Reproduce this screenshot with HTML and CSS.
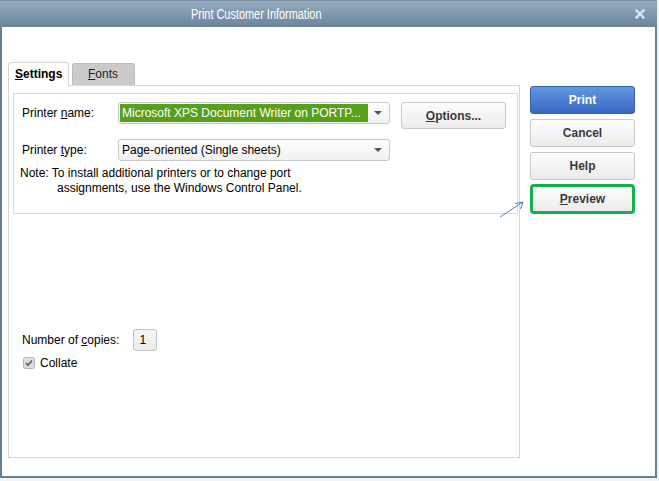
FILE: index.html
```html
<!DOCTYPE html>
<html lang="en">
<head>
  <meta charset="UTF-8">
  <title>Print Customer Information</title>
  <link rel="stylesheet" href="styles.css">
</head>
<body>
  <div class="window">
    <div class="titlebar">
      <span class="title">Print Customer Information</span>
      <svg class="close" width="10" height="10" viewBox="0 0 10 10">
        <path d="M1.5 1.5 L8.5 8.5 M8.5 1.5 L1.5 8.5" stroke="#dde3e8" stroke-width="2.4" stroke-linecap="square"/>
      </svg>
    </div>

    <div class="client">
      <div class="main">
        <div class="tabs">
          <div class="tab active"><u>S</u>ettings</div>
          <div class="tab"><u>F</u>onts</div>
        </div>

        <div class="panel">
          <div class="group">
            <div class="row">
              <span class="label">Printer <u>n</u>ame:</span>
              <div class="select">
                <span class="selected">Microsoft XPS Document Writer on PORTP...</span>
                <span class="caret"></span>
              </div>
              <button class="btn options"><u>O</u>ptions...</button>
            </div>
            <div class="row">
              <span class="label">Printer <u>t</u>ype:</span>
              <div class="select">
                <span class="value">Page-oriented (Single sheets)</span>
                <span class="caret"></span>
              </div>
            </div>
            <p class="note">Note: To install additional printers or to change port<br>assignments, use the Windows Control Panel.</p>
          </div>

          <div class="copies">
            <span>Number of <u>c</u>opies:</span>
            <div class="count">1</div>
          </div>
          <div class="collate">
            <svg class="checkbox" width="12" height="12" viewBox="0 0 12 12">
              <rect x="0.5" y="0.5" width="11" height="11" rx="2" fill="#dedede" stroke="#b4b4b4"/>
              <path d="M3 6.2 L5 8.2 L9 3.6" fill="none" stroke="#6a6a6a" stroke-width="1.8"/>
            </svg>
            <span>Collate</span>
          </div>
        </div>
      </div>

      <div class="actions">
        <button class="btn primary">Print</button>
        <button class="btn">Cancel</button>
        <button class="btn">Help</button>
        <button class="btn highlight"><u>P</u>review</button>
      </div>

      <!-- annotation arrow pointing at Preview -->
      <svg class="pointer" width="32" height="24" viewBox="0 0 32 24">
        <path d="M4 19 L27 4 M27 4 L19 5.5 M27 4 L24.5 11" fill="none" stroke="#4f82c8" stroke-width="1"/>
      </svg>
    </div>
  </div>
</body>
</html>
```

FILE: styles.css
```css
body {
  margin: 0;
  background-color: #f1f2f3;
  font-family: "Liberation Sans", Arial, sans-serif;
  font-size: 12px;
  color: #000;
}

.window {
  width: 657px;
  height: 478px;
  display: flex;
  flex-direction: column;
  background-color: #687f94;
}

.titlebar {
  height: 27px;
  flex: none;
  display: flex;
  align-items: center;
  background: linear-gradient(#94adc1, #6c8499);
  border-top: 1px solid #7a90a3;
  box-sizing: border-box;
}

.title {
  display: inline-block;
  margin-left: 191px;
  color: #fff;
  font-size: 14px;
  white-space: nowrap;
  transform: scaleX(0.78);
  transform-origin: left center;
}

.close {
  margin-left: auto;
  margin-right: 12px;
}

.client {
  position: relative;
  flex: 1;
  margin: 0 2px 2px 2px;
  background-color: #fff;
  display: flex;
  padding: 34px 0 0 6px;
}

/* Tabs + panel */
.main {
  width: 512px;
}

.tabs {
  display: flex;
  align-items: flex-end;
  gap: 3px;
  height: 24px;
}

.tab {
  height: 22px;
  line-height: 21px;
  padding: 0 15px;
  box-sizing: border-box;
  width: 63px;
  background-color: #cbcbcb;
  border: 1px solid #bcbcbc;
  border-bottom: none;
  border-radius: 3px 3px 0 0;
  color: #222;
}

.tab.active {
  position: relative;
  z-index: 1;
  width: 61px;
  height: 24px;
  line-height: 22px;
  padding: 0 6px;
  margin-bottom: -1px;
  background-color: #fff;
  border-color: #d4d4d4;
  font-weight: bold;
  color: #000;
}

.panel {
  height: 373px;
  box-sizing: border-box;
  border: 1px solid #d6d6d6;
  padding: 7px 1px 0 4px;
}

.group {
  height: 121px;
  box-sizing: border-box;
  border: 1px solid #dadada;
  padding: 8px 0 0 8px;
}

.row {
  display: flex;
  align-items: flex-start;
  margin-bottom: 15px;
}

.row + .row {
  margin-bottom: 0;
  margin-top: -5px;
}

.label {
  width: 96px;
  line-height: 22px;
}

.select {
  width: 272px;
  height: 22px;
  box-sizing: border-box;
  border: 1px solid #c9c9c9;
  border-radius: 3px;
  background: linear-gradient(#fefefe, #f1f1f1);
  display: flex;
  align-items: center;
  padding: 0 7px 0 1px;
}

.selected {
  width: 248px;
  height: 18px;
  line-height: 18px;
  background-color: #58a01a;
  color: #fff;
  white-space: nowrap;
  overflow: hidden;
  padding-left: 2px;
  box-sizing: border-box;
}

.value {
  padding-left: 2px;
}

.caret {
  margin-left: auto;
  width: 0;
  height: 0;
  border-left: 4px solid transparent;
  border-right: 4px solid transparent;
  border-top: 4px solid #555;
}

.note {
  margin: 5px 0 0 0;
  line-height: 15px;
  padding-left: 35px;
  text-indent: -37px;
  white-space: nowrap;
}

/* Buttons */
.btn {
  width: 105px;
  height: 28px;
  box-sizing: border-box;
  border: 1px solid #c9c9c9;
  border-radius: 3px;
  background: linear-gradient(#fdfdfd, #ebebeb);
  font-family: "Liberation Sans", Arial, sans-serif;
  font-size: 12px;
  font-weight: bold;
  color: #3a3a3a;
  padding: 0;
}

.options {
  margin-left: 11px;
  height: 27px;
}

.actions {
  display: flex;
  flex-direction: column;
  gap: 5px;
  margin: 25px 0 0 10px;
}

.btn.primary {
  background: linear-gradient(#6497e0, #3a67c6);
  border-color: #3560ad;
  color: #fff;
}

.btn.highlight {
  height: 30px;
  margin-top: -1px;
  border: 3px solid #13b04c;
  border-radius: 4px;
}

/* Copies */
.copies {
  display: flex;
  align-items: center;
  margin: 115px 0 0 9px;
}

.count {
  width: 24px;
  height: 22px;
  box-sizing: border-box;
  margin-left: 14px;
  border: 1px solid #c2c2c2;
  border-radius: 3px;
  background: linear-gradient(#f6f6f6, #ebebeb);
  line-height: 20px;
  padding-left: 5px;
}

.collate {
  display: flex;
  align-items: center;
  gap: 5px;
  margin: 5px 0 0 10px;
}

.pointer {
  position: absolute;
  left: 494px;
  top: 171px;
}
```
